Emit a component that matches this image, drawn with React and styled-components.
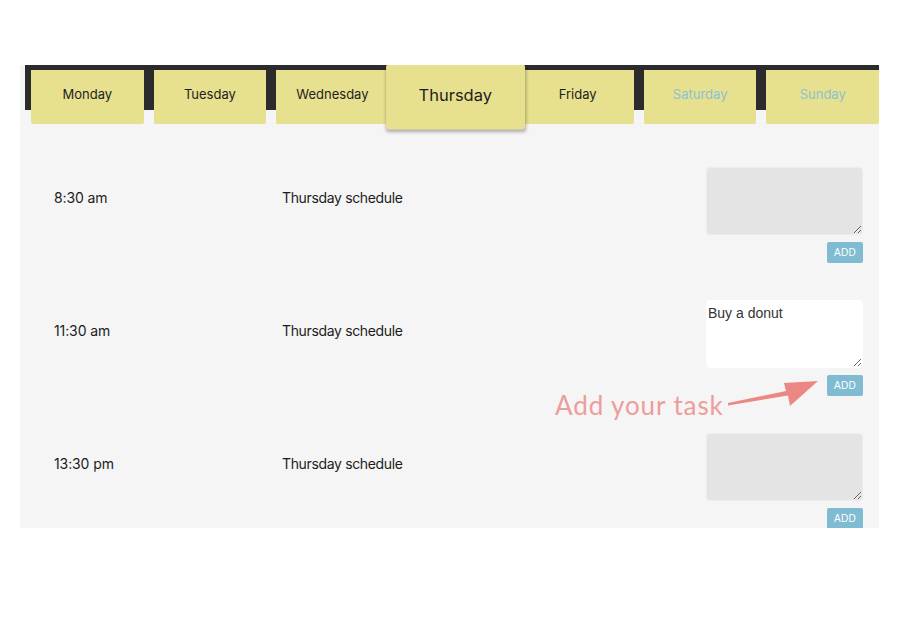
import React from "react";
import styled, { createGlobalStyle } from "styled-components";

const GlobalStyle = createGlobalStyle`
  html, body { margin: 0; padding: 0; background: #ffffff; }
  body { font-family: Inter, "Noto Sans", sans-serif; }
`;

const Page = styled.div`
  width: 900px;
  height: 630px;
  padding: 65px 0 0 20px;
  box-sizing: border-box;
`;

const Panel = styled.div`
  position: relative;
  width: 859px;
  height: 463px;
  background: #f5f5f5;
  overflow: hidden;
`;

const TabBar = styled.div`
  display: flex;
  align-items: flex-start;
  gap: 10px;
  height: 45px;
  margin-left: 5px;
  padding: 5px 0 0 6px;
  box-sizing: border-box;
  background: #2b2b2b;
`;

const Tab = styled.div`
  flex: 1;
  height: 54px;
  box-sizing: border-box;
  padding-bottom: ${(p) => (p.$active ? "5px" : "6px")};
  display: flex;
  align-items: center;
  justify-content: center;
  background: #e7e08e;
  font-size: ${(p) => (p.$active ? "13.4px" : "13px")};
  color: ${(p) => (p.$weekend ? "#8cc2d4" : "#1e1e1e")};
  position: relative;
  z-index: ${(p) => (p.$active ? 2 : 1)};
  transform: ${(p) => (p.$active ? "scale(1.23, 1.2)" : "none")};
  box-shadow: ${(p) => (p.$active ? "0 2px 3px rgba(0,0,0,0.3)" : "none")};
  border-radius: ${(p) => (p.$active ? "2px" : "0 0 2px 2px")};
`;

const Rows = styled.div`
  display: flex;
  flex-direction: column;
  gap: 37px;
  padding-top: 57px;
`;

const Row = styled.div`
  display: grid;
  grid-template-columns: 228px 1fr 157px;
  align-items: start;
  padding: 0 16px 0 34px;
`;

const Cell = styled.div`
  margin-top: 21px;
  font-size: 14px;
  line-height: 20px;
  color: #1c1c1c;
  letter-spacing: ${(p) => (p.$tight ? "-0.35px" : "-0.1px")};
`;

const TaskBox = styled.div`
  display: flex;
  flex-direction: column;
  align-items: flex-end;
  gap: 7px;
`;

const TaskInput = styled.textarea`
  width: 157px;
  height: 68px;
  box-sizing: border-box;
  margin: 0;
  padding: 4px 1px;
  border: 1px solid ${(p) => (p.$filled ? "#ffffff" : "#ececec")};
  border-radius: 4px;
  background: ${(p) => (p.$filled ? "#ffffff" : "#e4e4e4")};
  font-family: "Liberation Sans", Arial, sans-serif;
  font-size: 14px;
  color: #333;
  outline: none;
  resize: vertical;
`;

const AddButton = styled.button`
  width: 36px;
  height: 21px;
  padding: 0;
  border: none;
  border-radius: 2px;
  background: #7fbcd2;
  color: #ffffff;
  font-family: "Liberation Sans", Arial, sans-serif;
  font-size: 10px;
  letter-spacing: 0.3px;
`;

const Annotation = styled.div`
  position: absolute;
  left: 535px;
  top: 305px;
  width: 300px;
  height: 45px;
  pointer-events: none;
`;

const AnnotationText = styled.span`
  display: block;
  margin-top: 19px;
  font-family: Lato, "Open Sans", sans-serif;
  font-size: 26px;
  line-height: 32px;
  color: #ec9d9c;
  letter-spacing: 0.9px;
`;

const ArrowSvg = styled.svg`
  position: absolute;
  left: 145px;
  top: 0;
`;

const Arrow = () => (
  <ArrowSvg width="130" height="45" viewBox="0 0 130 45">
    <path
      d="M28 35.5 L28 33 L86 21 L84 13 L118 11 L90 36 L88 25.5 Z"
      fill="#ec8884"
    />
  </ArrowSvg>
);

const days = [
  "Monday",
  "Tuesday",
  "Wednesday",
  "Thursday",
  "Friday",
  "Saturday",
  "Sunday",
];

const schedule = [
  { time: "8:30 am", task: "" },
  { time: "11:30 am", task: "Buy a donut" },
  { time: "13:30 pm", task: "" },
];

export default function App() {
  return (
    <Page>
      <GlobalStyle />
      <Panel>
        <TabBar>
          {days.map((d) => (
            <Tab
              key={d}
              $active={d === "Thursday"}
              $weekend={d === "Saturday" || d === "Sunday"}
            >
              {d}
            </Tab>
          ))}
        </TabBar>
        <Rows>
          {schedule.map((s) => (
            <Row key={s.time}>
              <Cell>{s.time}</Cell>
              <Cell $tight>Thursday schedule</Cell>
              <TaskBox>
                <TaskInput $filled={!!s.task} defaultValue={s.task} />
                <AddButton>ADD</AddButton>
              </TaskBox>
            </Row>
          ))}
        </Rows>
        <Annotation>
          <AnnotationText>Add your task</AnnotationText>
          <Arrow />
        </Annotation>
      </Panel>
    </Page>
  );
}
